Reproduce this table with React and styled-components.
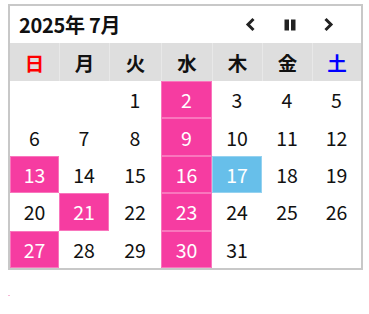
import React from 'react';
import styled, { createGlobalStyle } from 'styled-components';

const Global = createGlobalStyle`
  body {
    margin: 0;
    padding: 4px 8px;
    background: #fff;
    font-family: "Noto Sans CJK JP", "Noto Sans", sans-serif;
  }
`;

const Calendar = styled.div`
  width: 355px;
  box-sizing: border-box;
  border: 2px solid #c8c8c8;
  background: #fff;
`;

const Toolbar = styled.div`
  display: flex;
  align-items: center;
  height: 37px;
  padding-left: 9px;
`;

const Title = styled.div`
  flex: 1;
  font-size: 20px;
  font-weight: 700;
  color: #111;
  letter-spacing: -0.3px;
`;

const NavButton = styled.button`
  width: 39px;
  height: 30px;
  padding: 0;
  border: none;
  background: none;
  display: flex;
  align-items: center;
  justify-content: center;
  color: #222;
`;

const Nav = styled.div`
  display: flex;
  padding-right: 13px;
`;

const Grid = styled.div`
  display: grid;
  grid-template-columns: 49px 50px 52px 51px 50px 50px 49px;
`;

const DayName = styled.div`
  height: 38px;
  display: flex;
  align-items: center;
  justify-content: center;
  background: #dedede;
  border-left: 1px solid #e8e8e8;
  &:first-child {
    border-left: none;
  }
  font-size: 19.5px;
  font-weight: 700;
  color: ${(p) => p.$color || '#111'};
`;

const Cell = styled.div`
  height: 37.4px;
  box-sizing: border-box;
  display: flex;
  align-items: center;
  justify-content: center;
  font-size: 19.5px;
  border: 1px solid rgba(255, 255, 255, 0.3);
  background: ${(p) =>
    p.$kind === 'pink' ? '#f63ca1' : p.$kind === 'blue' ? '#67bfea' : '#fff'};
  color: ${(p) => (p.$kind ? '#fff' : '#111')};
`;

const Mark = styled.div`
  width: 2px;
  height: 1px;
  margin-top: 25px;
  background: #f7b8d6;
`;

const Chevron = ({ dir }) => (
  <svg width="11" height="15" viewBox="0 0 11 15">
    <polyline
      points={dir === 'left' ? '8.5,2 3,7.5 8.5,13' : '2.5,2 8,7.5 2.5,13'}
      fill="none"
      stroke="currentColor"
      strokeWidth="3"
    />
  </svg>
);

const Pause = () => (
  <svg width="12" height="12" viewBox="0 0 12 12">
    <rect x="0.5" y="0.5" width="4.5" height="11" fill="currentColor" />
    <rect x="7" y="0.5" width="4.5" height="11" fill="currentColor" />
  </svg>
);

const names = [
  { n: '日', c: '#ff0000' },
  { n: '月' },
  { n: '火' },
  { n: '水' },
  { n: '木' },
  { n: '金' },
  { n: '土', c: '#0000ff' }
];

const pink = [2, 9, 13, 16, 21, 23, 27, 30];
const blue = [17];

export default function App() {
  const days = [null, null, ...Array.from({ length: 31 }, (_, i) => i + 1)];
  while (days.length < 35) days.push(null);

  return (
    <>
      <Global />
      <Calendar>
        <Toolbar>
          <Title>2025年 7月</Title>
          <Nav>
            <NavButton>
              <Chevron dir="left" />
            </NavButton>
            <NavButton>
              <Pause />
            </NavButton>
            <NavButton>
              <Chevron dir="right" />
            </NavButton>
          </Nav>
        </Toolbar>
        <Grid>
          {names.map((d) => (
            <DayName key={d.n} $color={d.c}>
              {d.n}
            </DayName>
          ))}
          {days.map((d, i) => (
            <Cell
              key={i}
              $kind={pink.includes(d) ? 'pink' : blue.includes(d) ? 'blue' : null}
            >
              {d}
            </Cell>
          ))}
        </Grid>
      </Calendar>
      <Mark />
    </>
  );
}
